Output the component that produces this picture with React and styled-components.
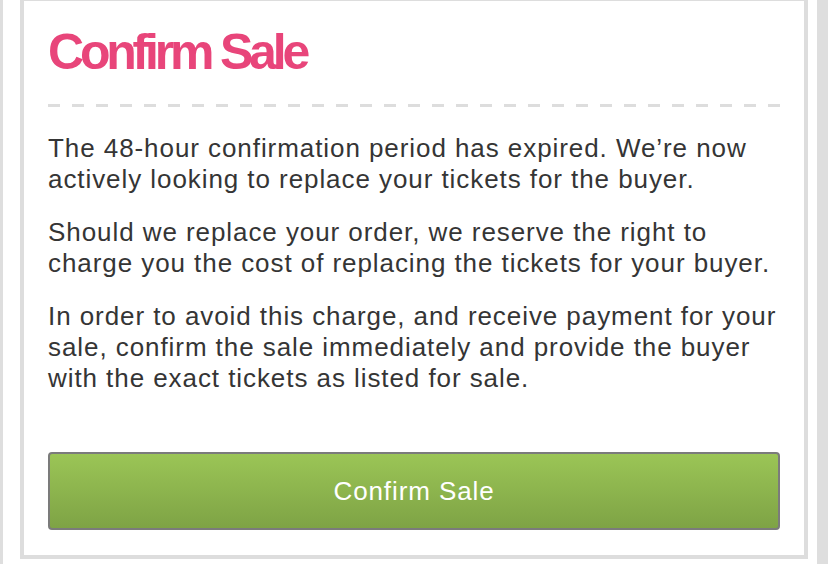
import React from "react";
import styled, { createGlobalStyle } from "styled-components";

const Global = createGlobalStyle`
  html, body { margin: 0; padding: 0; background: #ffffff; }
  body { font-family: "Liberation Sans", Arial, Helvetica, sans-serif; }
`;

const Page = styled.div`
  display: flex;
  width: 828px;
  height: 564px;
  overflow: hidden;
  background: #ffffff;
`;

const Edge = styled.div`
  flex: 0 0 ${(p) => p.$w}px;
  background: #dedede;
`;

const Gap = styled.div`
  flex: 0 0 ${(p) => p.$w}px;
`;

const Card = styled.section`
  flex: 0 0 788px;
  box-sizing: border-box;
  height: 562px;
  margin-top: -3px;
  border: 4px solid #dddddd;
  background: #ffffff;
  padding: 21px 24px 25px;
  display: flex;
  flex-direction: column;
`;

const Title = styled.h1`
  margin: 0;
  font-family: "Liberation Sans", Arial, Helvetica, sans-serif;
  font-weight: 700;
  font-size: 50px;
  line-height: 60px;
  letter-spacing: -4.2px;
  color: #e8457a;
`;

const Divider = styled.div`
  margin-top: 22px;
  height: 3px;
  background: repeating-linear-gradient(
    to right,
    #dddddd 0 12px,
    transparent 12px 24px
  );
`;

const Body = styled.div`
  margin-top: 26px;
  display: flex;
  flex-direction: column;
  gap: 22px;
`;

const Para = styled.p`
  margin: 0;
  font-size: 26px;
  line-height: 31px;
  letter-spacing: 0.93px;
  color: #353535;
`;

const Button = styled.button`
  margin-top: 58px;
  height: 78px;
  width: 100%;
  box-sizing: border-box;
  border: 2px solid #7b7b7b;
  border-radius: 4px;
  background: linear-gradient(to bottom, #9bc556, #7ea345);
  color: #ffffff;
  font-family: "Liberation Sans", Arial, Helvetica, sans-serif;
  font-size: 26px;
  letter-spacing: 0.9px;
  cursor: pointer;
`;

export default function App() {
  return (
    <>
      <Global />
      <Page>
        <Edge $w={3} />
        <Gap $w={17} />
        <Card>
          <Title>Confirm Sale</Title>
          <Divider />
          <Body>
            <Para>
              The 48-hour confirmation period has expired. We’re now actively
              looking to replace your tickets for the buyer.
            </Para>
            <Para>
              Should we replace your order, we reserve the right to charge you
              the cost of replacing the tickets for your buyer.
            </Para>
            <Para>
              In order to avoid this charge, and receive payment for your sale,
              confirm the sale immediately and provide the buyer with the exact
              tickets as listed for sale.
            </Para>
          </Body>
          <Button>Confirm Sale</Button>
        </Card>
        <Gap $w={9} />
        <Edge $w={11} />
      </Page>
    </>
  );
}
